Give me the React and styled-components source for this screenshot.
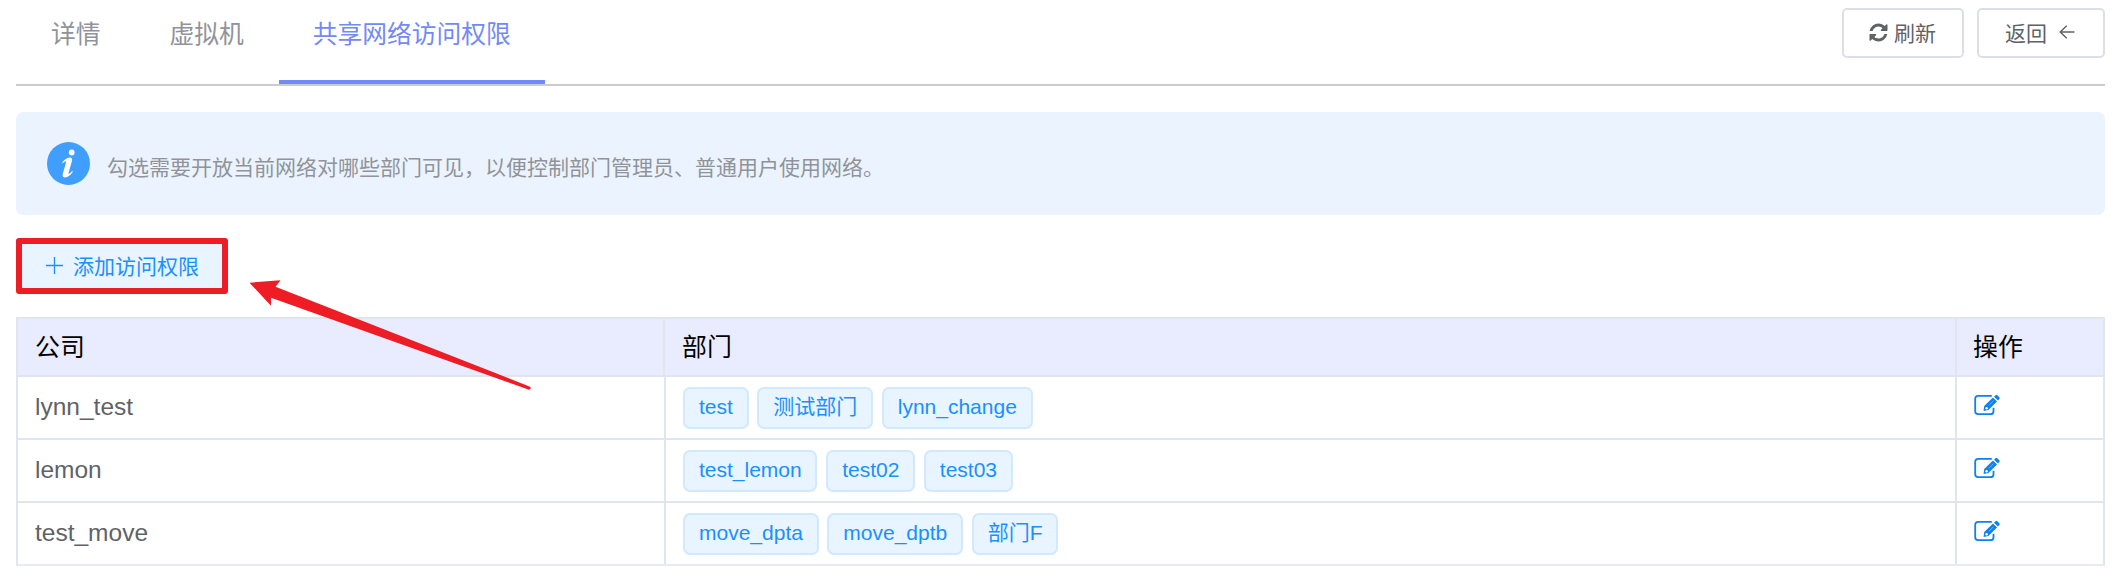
import React from "react";
import styled, { createGlobalStyle } from "styled-components";

const Global = createGlobalStyle`
  * { box-sizing: border-box; }
  body {
    margin: 0;
    background: #fff;
    color: #606266;
    font-family: "Liberation Sans", "Noto Sans CJK SC", sans-serif;
    font-size: 24.5px;
  }
`;

const Page = styled.main`
  position: relative;
  width: 2117px;
  height: 579px;
  padding: 0 12px 0 16px;
  overflow: hidden;
`;

const Header = styled.header`
  display: flex;
  justify-content: space-between;
  height: 86px;
  border-bottom: 2px solid #ccc;
`;

const Tabs = styled.nav`
  display: flex;
  padding-left: 1px;
`;

const Tab = styled.a`
  height: 84px;
  padding: 15px 34px 0;
  line-height: 40px;
  font-size: 24.75px;
  color: ${(p) => (p.$active ? "#7289f7" : "#909399")};
  border-bottom: 4px solid ${(p) => (p.$active ? "#7289f7" : "transparent")};
  &:not(:last-child) { margin-right: 1px; }
`;

const Actions = styled.div`
  display: flex;
  gap: 13px;
  padding-top: 8px;
`;

const Button = styled.button`
  display: flex;
  align-items: center;
  justify-content: center;
  gap: ${(p) => p.$gap}px;
  width: ${(p) => p.$width}px;
  height: 50px;
  padding: 0 2px 2px 0;
  border: 2px solid #dcdfe6;
  border-radius: 5px;
  background: #fff;
  color: #606266;
  font: inherit;
  font-size: 21px;
`;

const Notice = styled.section`
  display: flex;
  align-items: center;
  gap: 17px;
  height: 103px;
  margin-top: 26px;
  padding: 0 31px;
  border-radius: 7px;
  background: #ebf3ff;
  color: #909399;
  font-size: 21px;
`;

const NoticeText = styled.p`
  margin: 4px 0 0;
`;

const AddButton = styled.button`
  display: flex;
  align-items: center;
  gap: 10px;
  width: 212px;
  height: 56px;
  margin: 23px 0;
  padding: 0 0 2px 24px;
  border: 6px solid #ee1c25;
  border-radius: 3px;
  background: #e8f4ff;
  color: #1890ff;
  font: inherit;
  font-size: 21px;
`;

const Table = styled.section`
  width: 2089px;
  border: 2px solid #dfe6ec;
  border-bottom-color: #e6ebf5;
`;

const Row = styled.div`
  display: grid;
  grid-template-columns: ${(p) => (p.$head ? "647px 1292px 1fr" : "648px 1291px 1fr")};
  height: ${(p) => (p.$head ? 58 : 63)}px;
  background: ${(p) => (p.$head ? "#e9ecfe" : "#fff")};
  color: ${(p) => (p.$head ? "#000" : "#606266")};
  border-bottom: 2px solid #dfe6ec;
  &:last-child { border-bottom: 0; height: 61px; }
`;

const Cell = styled.div`
  display: flex;
  align-items: center;
  gap: 8.75px;
  padding-left: 17px;
  border-right: 2px solid #dfe6ec;
  &:last-child { border-right: 0; padding-left: 16px; }
`;

const Label = styled.span`
  padding-bottom: ${(p) => (p.$head ? 4 : 2)}px;
  font-size: ${(p) => (p.$head ? 24.9 : 24.5)}px;
`;

const Tag = styled.span`
  height: 42px;
  padding: 0 13.7px 0 14px;
  line-height: 35px;
  border: 2px solid #d1e9ff;
  border-radius: 7px;
  background: #e8f4ff;
  color: #1890ff;
  font-size: 21px;
  white-space: nowrap;
`;

const EditLink = styled.a`
  display: flex;
  color: #1080f0;
  margin-top: -6px;
  margin-left: 1px;
`;

const Pointer = styled.svg`
  position: absolute;
  left: 0;
  top: 0;
  pointer-events: none;
`;

const RefreshIcon = () => (
  <svg width="21" height="21" viewBox="0 0 1792 1792" fill="currentColor">
    <path d="M1639 1056q0 5-1 7-64 268-268 434.5t-478 166.5q-146 0-282.5-55t-243.5-157l-129 129q-19 19-45 19t-45-19-19-45v-448q0-26 19-45t45-19h448q26 0 45 19t19 45-19 45l-137 137q71 66 161 102t187 36q134 0 250-65t186-179q11-17 53-117 8-23 30-23h192q13 0 22.500 9.500t9.500 22.500zm25-800v448q0 26-19 45t-45 19h-448q-26 0-45-19t-19-45 19-45l138-138q-148-137-349-137-134 0-250 65t-186 179q-11 17-53 117-8 23-30 23h-199q-13 0-22.500-9.500t-9.500-22.500v-7q65-268 270-434.500t480-166.500q146 0 284 55.500t245 156.500l130-129q19-19 45-19t45 19 19 45z" />
  </svg>
);

const BackIcon = () => (
  <svg width="16" height="16" viewBox="0 0 16 16" fill="none" stroke="currentColor" strokeWidth="1.400">
    <path d="M15.500 8H1M7.700 1.700 1.200 8 7.700 14.300" />
  </svg>
);

const InfoIcon = () => (
  <svg width="43" height="43" viewBox="0 0 43 43">
    <circle cx="21.500" cy="21.500" r="21.500" fill="#409eff" />
    <circle cx="24.700" cy="10.500" r="2.900" fill="#fff" />
    <path d="M15.200 20.500c2.500-3.200 5.400-5 7.700-5 2 0 2.600 1.400 2 3.700l-3.300 11.500c-.5 1.800.6 1.700 3.500-1.700l.8.700c-2.700 3.900-5.200 5.700-7.700 5.700-2.200 0-3-1.400-2.400-3.700l3.200-11.200c.5-1.900-.6-1.700-3 .7z" fill="#fff" />
  </svg>
);

const PlusIcon = () => (
  <svg width="17" height="17" viewBox="0 0 17 17" stroke="currentColor" strokeWidth="1.300">
    <path d="M0 8.500h17M8.500 0v17" />
  </svg>
);

const EditIcon = () => (
  <svg width="26" height="22" viewBox="0 0 26 22" fill="none" stroke="currentColor">
    <path d="M17.800 1.800H4.200Q1.200 1.800 1.200 4.800v12.500Q1.200 20.200 4.200 20.200h12.300q3 0 3-3v-3.500" strokeWidth="1.800" />
    <path d="M9.600 16.900l.6-4.900L19 3.600l4 3.800-8.600 8.600z" fill="currentColor" stroke="none" />
    <path d="M20 2.700 21.500 1.200q.9-.8 1.800 0l2 2q.8.900 0 1.800L24 6.500z" fill="currentColor" stroke="none" />
    <circle cx="12.600" cy="14.200" r="1.200" fill="#fff" stroke="none" />
    <path d="M14.800 11.300l4.600-4.400" stroke="#fff" strokeWidth=".4" />
  </svg>
);

const rows = [
  { company: "lynn_test", departments: ["test", "测试部门", "lynn_change"] },
  { company: "lemon", departments: ["test_lemon", "test02", "test03"] },
  { company: "test_move", departments: ["move_dpta", "move_dptb", "部门F"] },
];

export default function App() {
  return (
    <Page>
      <Global />
      <Header>
        <Tabs>
          <Tab>详情</Tab>
          <Tab>虚拟机</Tab>
          <Tab $active>共享网络访问权限</Tab>
        </Tabs>
        <Actions>
          <Button $width={122} $gap={5}><RefreshIcon />刷新</Button>
          <Button $width={128} $gap={12}>返回<BackIcon /></Button>
        </Actions>
      </Header>
      <Notice>
        <InfoIcon />
        <NoticeText>勾选需要开放当前网络对哪些部门可见，以便控制部门管理员、普通用户使用网络。</NoticeText>
      </Notice>
      <AddButton><PlusIcon />添加访问权限</AddButton>
      <Table>
        <Row $head>
          <Cell><Label $head>公司</Label></Cell>
          <Cell><Label $head>部门</Label></Cell>
          <Cell><Label $head>操作</Label></Cell>
        </Row>
        {rows.map((row) => (
          <Row key={row.company}>
            <Cell><Label>{row.company}</Label></Cell>
            <Cell>{row.departments.map((name) => <Tag key={name}>{name}</Tag>)}</Cell>
            <Cell><EditLink><EditIcon /></EditLink></Cell>
          </Row>
        ))}
      </Table>
      <Pointer width="560" height="420" viewBox="0 0 560 420">
        <path d="M249.500 282.700 280.500 280.300 275.500 286.700 530 386.700Q532 388.500 529 389.800L271 297.700V305.700Z" fill="#ee1c25" />
      </Pointer>
    </Page>
  );
}
